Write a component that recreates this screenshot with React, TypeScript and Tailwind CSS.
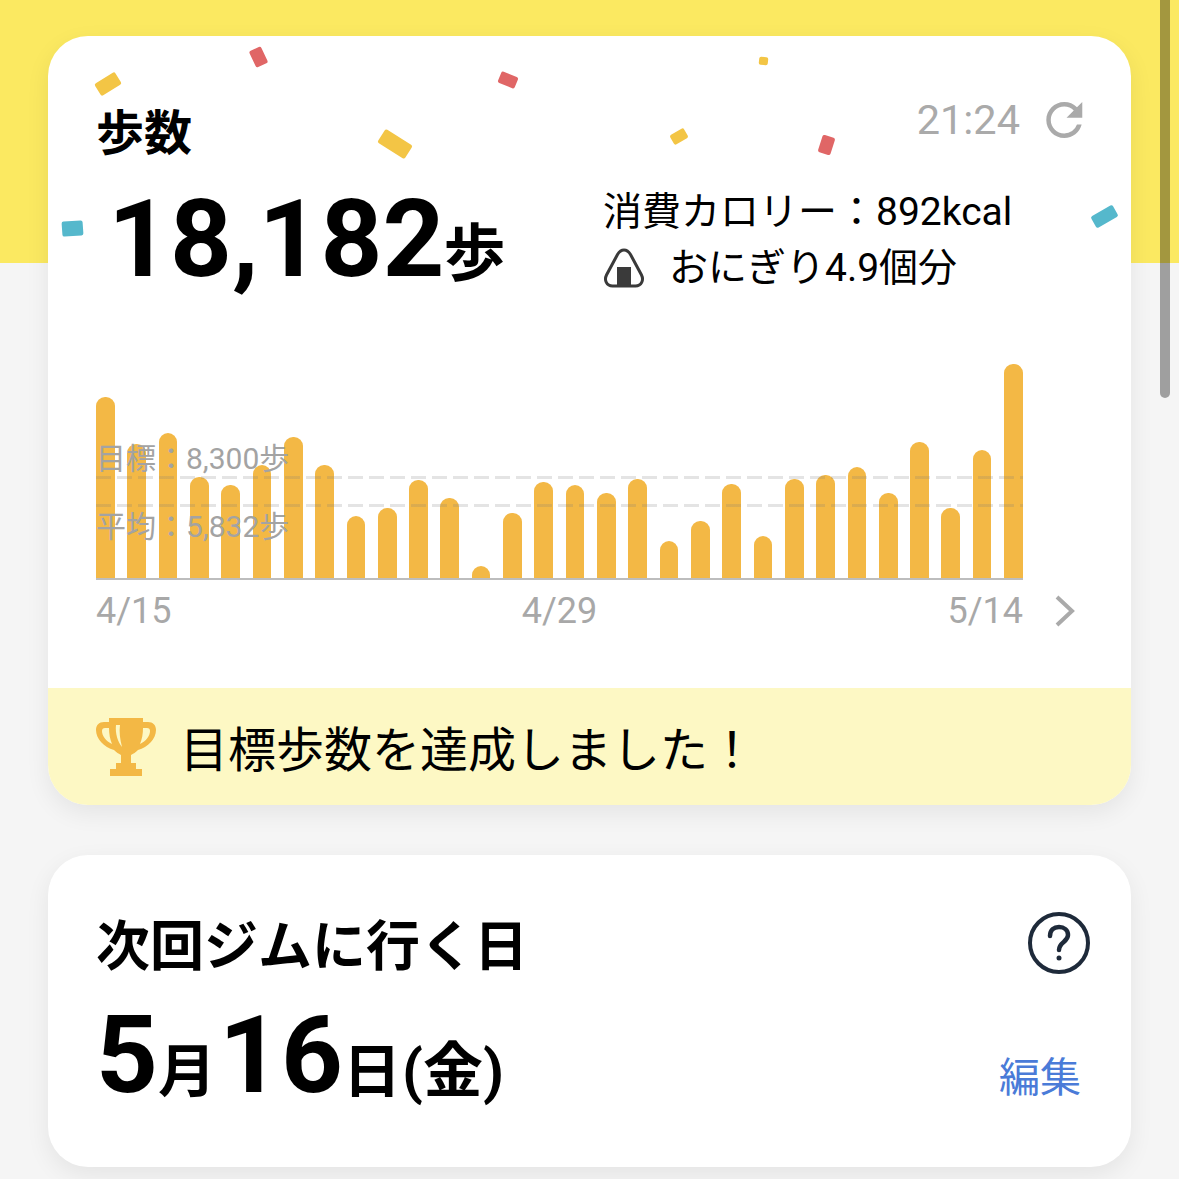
// Bar heights in px, oldest day first (4/15 to 5/14)
const bars = [
  181, 134, 145, 101, 93, 113, 141, 113, 62, 70, 98, 80, 12, 65, 96,
  93, 85, 99, 37, 57, 94, 42, 99, 103, 111, 85, 136, 70, 128, 214,
];

const confetti = [
  { color: 'bg-[#f3c545]', box: 'left-[96px] top-[77px] h-[14px] w-[24px] -rotate-[32deg]' },
  { color: 'bg-[#e06666]', box: 'left-[252px] top-[48px] h-[18px] w-[13px] -rotate-[25deg]' },
  { color: 'bg-[#e06666]', box: 'left-[499px] top-[74px] h-[12px] w-[18px] rotate-[22deg]' },
  { color: 'bg-[#f3c545]', box: 'left-[379px] top-[136px] h-[16px] w-[32px] rotate-[32deg]' },
  { color: 'bg-[#55b8cc]', box: 'left-[62px] top-[221px] h-[15px] w-[21px] -rotate-[4deg]' },
  { color: 'bg-[#f3c545]', box: 'left-[759px] top-[57px] h-[8px] w-[9px] rotate-[6deg]' },
  { color: 'bg-[#f3c545]', box: 'left-[671px] top-[131px] h-[11px] w-[16px] -rotate-[30deg]' },
  { color: 'bg-[#e06666]', box: 'left-[820px] top-[136px] h-[18px] w-[13px] rotate-[18deg]' },
  { color: 'bg-[#55b8cc]', box: 'left-[1092px] top-[210px] h-[13px] w-[25px] -rotate-[30deg]' },
];

function RefreshIcon() {
  return (
    <svg viewBox="4 4 16.2 16" className="h-[36px] w-[37px] fill-[#aaaaaa]">
      <path d="M17.65 6.35A7.958 7.958 0 0 0 12 4c-4.42 0-7.99 3.58-7.99 8s3.57 8 7.99 8c3.73 0 6.84-2.55 7.73-6h-2.08A5.99 5.99 0 0 1 12 18c-3.31 0-6-2.69-6-6s2.69-6 6-6c1.66 0 3.14.69 4.22 1.78L13 11h7V4l-2.35 2.35z" />
    </svg>
  );
}

function Onigiri() {
  return (
    <svg viewBox="0 0 42 40" className="h-[40px] w-[42px]">
      <path
        d="M21 2c-3 0-5 2-6.500 4.500L3.500 27c-2.500 5 0 11 6 11h23c6 0 8.500-6 6-11L27.500 6.500C26 4 24 2 21 2z"
        fill="none"
        stroke="#3a3a3a"
        strokeWidth="3"
      />
      <rect x="14" y="19" width="14" height="18" fill="#3a3a3a" />
    </svg>
  );
}

function Trophy() {
  return (
    <svg viewBox="0 0 60 58" className="h-[58px] w-[60px]" fill="#f3b845">
      <path d="M13 0h34v4h5c5 0 8 3 8 8 0 9-8 17-18 20-2 2-5 4-7 5v8h5v6h6v7H14v-7h6v-6h5v-8c-2-1-5-3-7-5C8 29 0 21 0 12 0 7 3 4 8 4h5V0zM13 10H9c-2 0-3 1-3 3 0 5 4 10 10 13-2-5-3-10-3-16zm34 0c0 6-1 11-3 16 6-3 10-8 10-13 0-2-1-3-3-3h-4z" fillRule="evenodd" />
      <path d="M20 7h4c-1 7 0 14 2 22-4-5-7-13-6-22z" fill="#fdf8c4" />
    </svg>
  );
}

function Chart() {
  return (
    <div className="relative">
      <div className="flex h-[216px] items-end justify-between border-b-2 border-[#bdbdbd]">
        {bars.map((h, i) => (
          <div key={i} className="w-[18.700px] rounded-t-[9px] bg-[#f3b845]" style={{ height: h }} />
        ))}
      </div>
      <div className="absolute left-0 right-0 top-[112px] h-[3px] bg-[repeating-linear-gradient(90deg,rgba(120,120,120,0.2)_0_15px,transparent_15px_21px)]" />
      <div className="absolute left-0 right-0 top-[140px] h-[3px] bg-[repeating-linear-gradient(90deg,rgba(120,120,120,0.2)_0_15px,transparent_15px_21px)]" />
      <div className="absolute left-0 top-[75px] text-[30px] leading-[40px] text-[#a3a3a3]">目標：8,300歩</div>
      <div className="absolute left-0 top-[143px] text-[30px] leading-[40px] text-[#a3a3a3]">平均：5,832歩</div>
    </div>
  );
}

export default function App() {
  return (
    <div
      lang="ja"
      className="relative h-[1179px] overflow-hidden bg-[#f5f5f5] font-[Roboto,'Noto_Sans_CJK_JP',sans-serif] text-black"
    >
      <div className="absolute inset-x-0 top-0 h-[263px] bg-[#fbe961]" />

      <main className="relative flex flex-col gap-[50px] px-[48px] pt-[36px]">
        <section className="flex h-[769px] flex-col overflow-hidden rounded-[40px] bg-white shadow-[0_8px_24px_rgba(0,0,0,0.07)]">
          <div className="flex-1 px-[48px] pt-[68px]">
            <div className="flex h-[60px] items-center justify-between">
              <h2 className="text-[48px] font-bold leading-[60px]">歩数</h2>
              <div className="flex items-center gap-[26px] pb-[28px]">
                <span className="text-[41.500px] leading-[48px] text-[#aaaaaa]">21:24</span>
                <RefreshIcon />
              </div>
            </div>

            <div className="flex h-[140px] items-start justify-between">
              <div className="ml-[12px] flex items-baseline pt-[11px]">
                <span className="text-[108px] font-bold leading-[128px]">18,182</span>
                <span className="-ml-[1px] text-[62px] font-bold leading-[128px]">歩</span>
              </div>
              <div className="mr-[73px] w-[407px] whitespace-nowrap pt-[21px]">
                <div className="text-[39px] leading-[54px]">消費カロリー：892kcal</div>
                <div className="mt-[2px] flex h-[54px] items-center gap-[24px] text-[39px]">
                  <Onigiri />
                  <span>おにぎり4.9個分</span>
                </div>
              </div>
            </div>

            <div className="mr-[60px] mt-[60px]">
              <Chart />
              <div className="mt-[9px] flex items-center justify-between text-[36px] leading-[44px] text-[#a8a8a8]">
                <span>4/15</span>
                <span>4/29</span>
                <span>5/14</span>
              </div>
            </div>
          </div>

          <div className="flex h-[117px] items-center gap-[24px] bg-[#fdf8c4] pl-[48px]">
            <Trophy />
            <span className="pt-[8px] text-[48px] leading-[60px]">目標歩数を達成しました！</span>
          </div>
        </section>

        <section className="flex h-[312px] flex-col rounded-[40px] bg-white pl-[48px] pr-[50px] pt-[56px] shadow-[0_8px_24px_rgba(0,0,0,0.07)]">
          <div className="flex items-center justify-between">
            <h2 className="text-[54px] font-bold leading-[70px]">次回ジムに行く日</h2>
            <svg viewBox="0 0 64 64" className="-mr-[10px] mb-[10px] h-[64px] w-[64px]" fill="none" stroke="#1e2a3a" strokeWidth="4">
              <circle cx="32" cy="32" r="29" />
              <path d="M23 25c0-6 4-9 9-9s9 3 9 8c0 7-9 7-9 15" strokeWidth="4.500" strokeLinecap="round" />
              <circle cx="32" cy="47" r="2.500" fill="#1e2a3a" stroke="none" />
            </svg>
          </div>
          <div className="mt-[7px] flex items-end justify-between">
            <div className="flex items-baseline font-bold">
              <span className="text-[108px] leading-[126px]">5</span>
              <span className="text-[58px] leading-[126px]">月</span>
              <span className="ml-[3px] text-[108px] leading-[126px]">16</span>
              <span className="text-[58px] leading-[126px]">日</span>
              <span className="ml-[1px] text-[60px] leading-[126px]">(金)</span>
            </div>
            <span className="pb-[29px] text-[41px] leading-[56px] text-[#4a7bd8]">編集</span>
          </div>
        </section>
      </main>

      {/* confetti sits over the first card */}
      {confetti.map((c, i) => (
        <div key={i} className={`absolute rounded-[2px] ${c.color} ${c.box}`} />
      ))}

      {/* next-page chevron beside the axis labels */}
      <svg viewBox="0 0 20 32" className="absolute left-[1055px] top-[595px] h-[32px] w-[20px]" fill="none" stroke="#aaaaaa" strokeWidth="4">
        <path d="M2 2l15 14L2 30" />
      </svg>

      {/* scrollbar */}
      <div className="absolute right-[9px] top-0 h-[398px] w-[10px] rounded-b-[5px] bg-black/35" />
    </div>
  );
}
